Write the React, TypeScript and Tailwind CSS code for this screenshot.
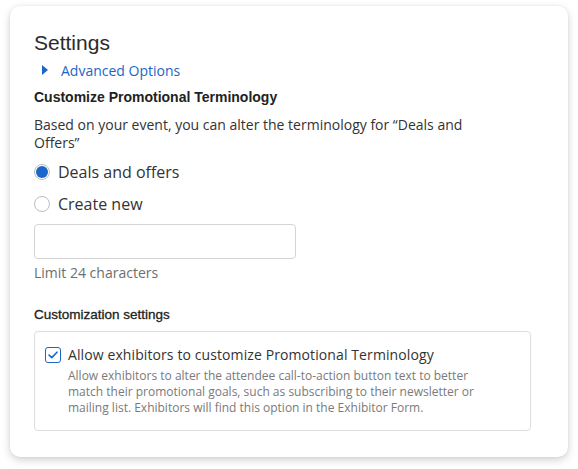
import React, { useState } from 'react';

const sans = "font-['Open_Sans','Noto_Sans',sans-serif]";
const helv = "font-['Liberation_Sans','Arial',sans-serif]";

const App: React.FC = () => {
  const [choice, setChoice] = useState<'deals' | 'new'>('deals');
  const [allow, setAllow] = useState(true);

  return (
    <div className="min-h-screen bg-white pl-[10px] pt-[6px]">
      <div className="h-[451px] w-[558px] rounded-[10px] bg-white px-[24px] pt-[25px] shadow-[0_3px_8px_rgba(0,0,0,0.18),0_0_3px_rgba(0,0,0,0.06)]">
        <h2 className={`${helv} text-[21px] leading-[24px] text-[#2b2b2b]`}>Settings</h2>

        <button type="button" className={`${sans} mt-[5px] flex h-[20px] items-center text-[14px] text-[#1a66c9]`}>
          <svg width="6" height="10" viewBox="0 0 6 10" className="ml-[8px] mr-[13px]">
            <path d="M0 0 L6 5 L0 10 Z" fill="#1a66c9" />
          </svg>
          Advanced Options
        </button>

        <div className={`${helv} mt-[7px] text-[14px] font-bold leading-[20px] text-[#222]`}>
          Customize Promotional Terminology
        </div>
        <p className={`${sans} mt-[9px] max-w-[440px] text-[14px] leading-[18px] text-[#333]`}>
          Based on your event, you can alter the terminology for “Deals and Offers”
        </p>

        <div className={`${sans} mt-[8px] flex flex-col gap-[8px] text-[16px] text-[#333]`}>
          {[
            { id: 'deals' as const, label: 'Deals and offers' },
            { id: 'new' as const, label: 'Create new' },
          ].map((o) => (
            <label key={o.id} className="flex h-[24px] cursor-pointer items-center">
              <span
                onClick={() => setChoice(o.id)}
                className="mr-[8px] flex h-[16px] w-[16px] items-center justify-center rounded-full border border-[#bdbdbd] bg-white"
              >
                {choice === o.id && <span className="h-[12px] w-[12px] rounded-full bg-[#1a66c9]" />}
              </span>
              {o.label}
            </label>
          ))}
        </div>

        <input
          type="text"
          className="mt-[8px] block h-[35px] w-[262px] rounded-[4px] border border-[#d4d4d4] px-[8px] text-[14px] outline-none"
        />
        <div className={`${sans} mt-[5px] text-[14px] leading-[18px] text-[#6e6e6e]`}>Limit 24 characters</div>

        <div className={`${helv} mt-[23px] text-[13.5px] font-medium leading-[20px] text-[#222] [-webkit-text-stroke:0.3px_#222]`}>
          Customization settings
        </div>

        <div className="mt-[6px] w-[497px] rounded-[4px] border border-[#dedede] pb-[14px] pl-[10px] pr-[16px] pt-[13px]">
          <label className="flex cursor-pointer items-start">
            <span
              onClick={() => setAllow(!allow)}
              className="mr-[7px] mt-[2px] flex h-[16px] w-[16px] shrink-0 items-center justify-center rounded-[3px] border-[1.5px] border-[#1a66c9] bg-white"
            >
              {allow && (
                <svg width="10" height="8" viewBox="0 0 10 8">
                  <path d="M1 4 L3.8 6.6 L9 1.2" fill="none" stroke="#1a66c9" strokeWidth="1.6" strokeLinecap="round" strokeLinejoin="round" />
                </svg>
              )}
            </span>
            <span className={sans}>
              <span className="block text-[14px] leading-[20px] tracking-[0.1px] text-[#333]">
                Allow exhibitors to customize Promotional Terminology
              </span>
              <span className="mt-[3px] block max-w-[420px] text-[12px] leading-[16px] text-[#7a7a7a]">
                Allow exhibitors to alter the attendee call-to-action button text to better match their promotional goals, such as subscribing to their newsletter or mailing list. Exhibitors will find this option in the Exhibitor Form.
              </span>
            </span>
          </label>
        </div>
      </div>
    </div>
  );
};

export default App;
